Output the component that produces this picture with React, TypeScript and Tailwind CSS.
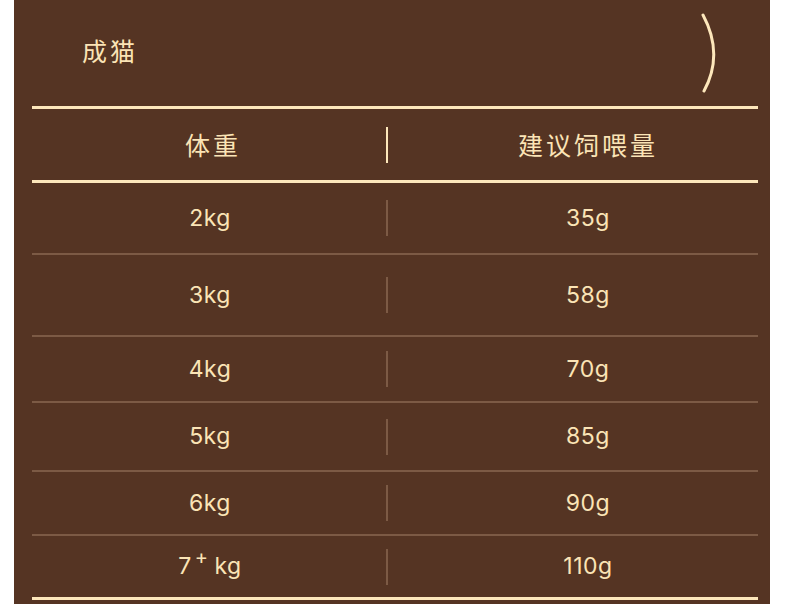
import React from "react";

const rows: { w: React.ReactNode; g: string; h: string }[] = [
  { w: "2kg", g: "35g", h: "h-[70px]" },
  { w: "3kg", g: "58g", h: "h-[80px]" },
  { w: "4kg", g: "70g", h: "h-[64px]" },
  { w: "5kg", g: "85g", h: "h-[67px]" },
  { w: "6kg", g: "90g", h: "h-[62px]" },
  {
    w: (
      <span>
        7<span className="relative top-[-10px] text-[20px] ml-[3px] mr-[6px]">+</span>kg
      </span>
    ),
    g: "110g",
    h: "h-[61px]",
  },
];

export default function App() {
  const cjk = { fontFamily: '"Noto Sans CJK SC", "Noto Sans", sans-serif' };
  const lat = { fontFamily: 'Inter, "Noto Sans CJK SC", sans-serif' };
  return (
    <div className="w-full h-[604px] bg-white flex overflow-hidden">
      <div className="ml-[14px] w-[756px] h-full bg-[#553423] pl-[18px] pr-[12px] text-[#fbe4b6]">
        <div className="h-[106px] flex items-center justify-between">
          <div className="pl-[50px] pb-[4px] text-[25px] tracking-[3px]" style={cjk}>
            成猫
          </div>
          <svg width="24" height="84" viewBox="0 0 24 84" className="mr-[33px] mb-[2px]">
            <path d="M2 5 Q 23 44 3 81" fill="none" stroke="#fde7bb" strokeWidth="3" strokeLinecap="round" />
          </svg>
        </div>
        <div className="h-[3px] bg-[#fde7bb]" />
        <div className="h-[71px] flex items-center text-[25px] tracking-[3px]" style={cjk}>
          <div className="w-[354px] text-center pl-[8px]">体重</div>
          <div className="w-[2px] h-[36px] bg-[#fde7bb]" />
          <div className="flex-1 text-center pl-[30px]">建议饲喂量</div>
        </div>
        <div className="h-[3px] bg-[#fde7bb]" />
        {rows.map((r, i) => (
          <React.Fragment key={i}>
            {i > 0 && <div className="h-[2px] bg-[#7c5a45]" />}
            <div className={`${r.h} flex items-center text-[23px] tracking-[0.5px]`} style={lat}>
              <div className="w-[354px] text-center pl-[2px]">{r.w}</div>
              <div className="w-[2px] h-[36px] bg-[#7c5a45]" />
              <div className="flex-1 text-center pl-[30px]">{r.g}</div>
            </div>
          </React.Fragment>
        ))}
        <div className="h-[3px] bg-[#fde7bb]" />
      </div>
    </div>
  );
}
